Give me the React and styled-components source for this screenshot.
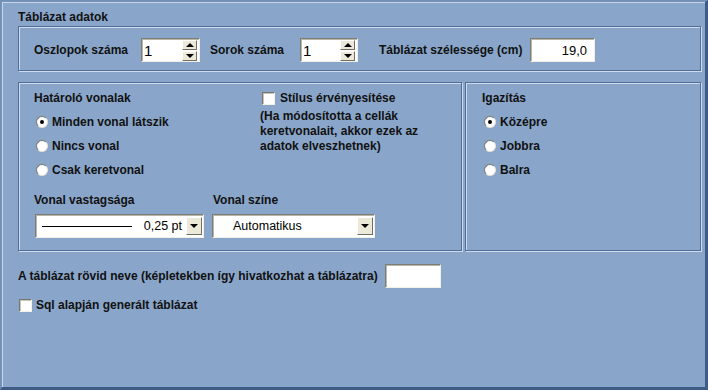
import React from 'react';
import styled, { createGlobalStyle } from 'styled-components';

const GlobalStyle = createGlobalStyle`
  body {
    margin: 0;
    background: #89a6ca;
    font-family: "Liberation Sans", Arial, sans-serif;
  }
`;

const Window = styled.div`
  box-sizing: border-box;
  width: 708px;
  height: 390px;
  background: #89a6ca;
  border-style: solid;
  border-width: 2px 3px 3px 2px;
  border-color: #7391b7 #3f5c84 #3f5c84 #7391b7;
  box-shadow: inset 1px 1px 0 #c9d7ea;
  padding: 7px 4px 0 16px;
  color: #111;
  font-size: 12px;
  font-weight: bold;
`;

const SectionTitle = styled.div`
  height: 17px;
  line-height: 17px;
`;

const Group = styled.div`
  box-sizing: border-box;
  height: ${(p) => p.$h}px;
  width: ${(p) => (p.$w ? `${p.$w}px` : 'auto')};
  border: 1px solid #50709a;
  box-shadow: inset 1px 1px 0 #cfdbec, 1px 1px 0 #cfdbec;
`;

const FieldRow = styled.div`
  display: flex;
  align-items: center;
  height: 100%;
  box-sizing: border-box;
  padding: 3px 0 0 15px;
`;

const Label = styled.span`
  display: inline-block;
  width: ${(p) => (p.$w ? `${p.$w}px` : 'auto')};
  white-space: nowrap;
`;

const Sunken = styled.div`
  box-sizing: border-box;
  display: flex;
  align-items: center;
  width: ${(p) => p.$w}px;
  height: 24px;
  margin-right: ${(p) => p.$mr || 0}px;
  margin-left: ${(p) => p.$ml || 0}px;
  background: #fff;
  border: 1px solid;
  border-color: #7d7d75 #f1efe6 #f1efe6 #7d7d75;
  box-shadow: inset 1px 1px 0 #b9b7aa;
  font-weight: normal;
`;

const SpinValue = styled.span`
  flex: 1;
  padding-left: 2px;
  font-size: 15px;
  color: #000;
`;

const NumberValue = styled.span`
  flex: 1;
  text-align: right;
  padding-right: 7px;
  font-size: 13px;
  color: #000;
`;

const SpinButtons = styled.div`
  display: flex;
  flex-direction: column;
  gap: 1px;
  margin-right: 2px;
`;

const RaisedButton = styled.div`
  box-sizing: border-box;
  width: ${(p) => p.$w}px;
  height: ${(p) => p.$h}px;
  margin-right: ${(p) => p.$mr || 0}px;
  display: flex;
  align-items: center;
  justify-content: center;
  background: #ece9d8;
  border: 1px solid;
  border-color: #fff #716f64 #716f64 #fff;
`;

const Arrow = styled.span`
  width: 0;
  height: 0;
  border-left: 4px solid transparent;
  border-right: 4px solid transparent;
  ${(p) => (p.$up ? 'border-bottom: 4px solid #000;' : 'border-top: 4px solid #000;')}
`;

const MiddleRow = styled.div`
  display: flex;
  gap: 3px;
  margin-top: 11px;
`;

const BorderGroup = styled.div`
  padding: 7px 0 0 15px;
`;

const TopArea = styled.div`
  display: grid;
  grid-template-columns: 226px 1fr;
`;

const Column = styled.div`
  display: flex;
  flex-direction: column;
`;

const GroupTitle = styled.div`
  height: 16px;
  line-height: 16px;
  margin-bottom: 4px;
  white-space: nowrap;
`;

const OptionRow = styled.div`
  display: flex;
  align-items: center;
  height: 24px;
  padding-left: 2px;
  gap: 4px;
  white-space: nowrap;
`;

const RadioDot = styled.span`
  box-sizing: border-box;
  position: relative;
  width: 12px;
  height: 12px;
  border-radius: 50%;
  background: #fff;
  border: 1px solid;
  border-color: #7a786c #e6e3d4 #e6e3d4 #7a786c;
  &::after {
    content: '';
    display: ${(p) => (p.$checked ? 'block' : 'none')};
    position: absolute;
    left: 3px;
    top: 3px;
    width: 4px;
    height: 4px;
    border-radius: 50%;
    background: #000;
  }
`;

const CheckRow = styled.div`
  display: flex;
  align-items: center;
  height: 16px;
  gap: ${(p) => p.$gap || 5}px;
  padding-left: ${(p) => p.$pl || 0}px;
  margin-top: ${(p) => p.$mt || 0}px;
  white-space: nowrap;
`;

const CheckBox = styled.span`
  box-sizing: border-box;
  width: 13px;
  height: 13px;
  background: #fff;
  border: 1px solid;
  border-color: #77766c #f3f1e8 #f3f1e8 #77766c;
  box-shadow: inset 1px 1px 0 #c8c6b8;
`;

const Note = styled.div`
  margin-top: 3px;
  line-height: 15px;
`;

const ComboArea = styled.div`
  display: flex;
  margin-top: 10px;
`;

const ComboField = styled.div`
  display: flex;
  flex-direction: column;
  width: ${(p) => p.$w}px;
`;

const ComboLabel = styled.div`
  height: 16px;
  line-height: 16px;
  margin-left: ${(p) => p.$ml || 0}px;
  margin-bottom: 6px;
`;

const ComboText = styled.span`
  flex: 1;
  display: flex;
  align-items: center;
  padding-left: ${(p) => p.$pl || 0}px;
  font-size: 12.5px;
  color: #000;
`;

const LineSample = styled.span`
  width: 90px;
  height: 1px;
  background: #000;
  margin-right: auto;
`;

const ComboValue = styled.span`
  margin-right: 4px;
`;

const AlignGroup = styled.div`
  padding: 7px 0 0 16px;
`;

const BottomRow = styled.div`
  display: flex;
  align-items: center;
  height: 24px;
  margin-top: 13px;
  gap: 7px;
`;

const Spinner = ({ value, width, mr }) => (
  <Sunken $w={width} $mr={mr}>
    <SpinValue>{value}</SpinValue>
    <SpinButtons>
      <RaisedButton $w={15} $h={10}><Arrow $up /></RaisedButton>
      <RaisedButton $w={15} $h={10}><Arrow /></RaisedButton>
    </SpinButtons>
  </Sunken>
);

const Radio = ({ checked, children }) => (
  <OptionRow>
    <RadioDot $checked={checked} />
    <span>{children}</span>
  </OptionRow>
);

const DropButton = () => (
  <RaisedButton $w={16} $h={18} $mr={1}><Arrow /></RaisedButton>
);

export default function App() {
  return (
    <>
      <GlobalStyle />
      <Window>
        <SectionTitle>Táblázat adatok</SectionTitle>
        <Group $h={45}>
          <FieldRow>
            <Label $w={107}>Oszlopok száma</Label>
            <Spinner value="1" width={59} mr={10} />
            <Label $w={90}>Sorok száma</Label>
            <Spinner value="1" width={58} mr={21} />
            <Label $w={151}>Táblázat szélessége (cm)</Label>
            <Sunken $w={65}>
              <NumberValue>19,0</NumberValue>
            </Sunken>
          </FieldRow>
        </Group>

        <MiddleRow>
          <Group $h={169} $w={444}>
            <BorderGroup>
              <TopArea>
                <Column>
                  <GroupTitle>Határoló vonalak</GroupTitle>
                  <Radio checked>Minden vonal látszik</Radio>
                  <Radio>Nincs vonal</Radio>
                  <Radio>Csak keretvonal</Radio>
                </Column>
                <Column>
                  <CheckRow $pl={2} $gap={5}>
                    <CheckBox />
                    <span>Stílus érvényesítése</span>
                  </CheckRow>
                  <Note>
                    (Ha módosította a cellák<br />
                    keretvonalait, akkor ezek az<br />
                    adatok elveszhetnek)
                  </Note>
                </Column>
              </TopArea>
              <ComboArea>
                <ComboField $w={178}>
                  <ComboLabel>Vonal vastagsága</ComboLabel>
                  <Sunken $w={169} $ml={1}>
                    <ComboText $pl={6}>
                      <LineSample />
                      <ComboValue>0,25 pt</ComboValue>
                    </ComboText>
                    <DropButton />
                  </Sunken>
                </ComboField>
                <ComboField $w={163}>
                  <ComboLabel $ml={1}>Vonal színe</ComboLabel>
                  <Sunken $w={163}>
                    <ComboText $pl={20}>Automatikus</ComboText>
                    <DropButton />
                  </Sunken>
                </ComboField>
              </ComboArea>
            </BorderGroup>
          </Group>

          <Group $h={169} $w={236}>
            <AlignGroup>
              <GroupTitle>Igazítás</GroupTitle>
              <Radio checked>Középre</Radio>
              <Radio>Jobbra</Radio>
              <Radio>Balra</Radio>
            </AlignGroup>
          </Group>
        </MiddleRow>

        <BottomRow>
          <Label>A táblázat rövid neve (képletekben így hivatkozhat a táblázatra)</Label>
          <Sunken $w={56} />
        </BottomRow>
        <CheckRow $pl={1} $gap={4} $mt={9}>
          <CheckBox />
          <span>Sql alapján generált táblázat</span>
        </CheckRow>
      </Window>
    </>
  );
}
